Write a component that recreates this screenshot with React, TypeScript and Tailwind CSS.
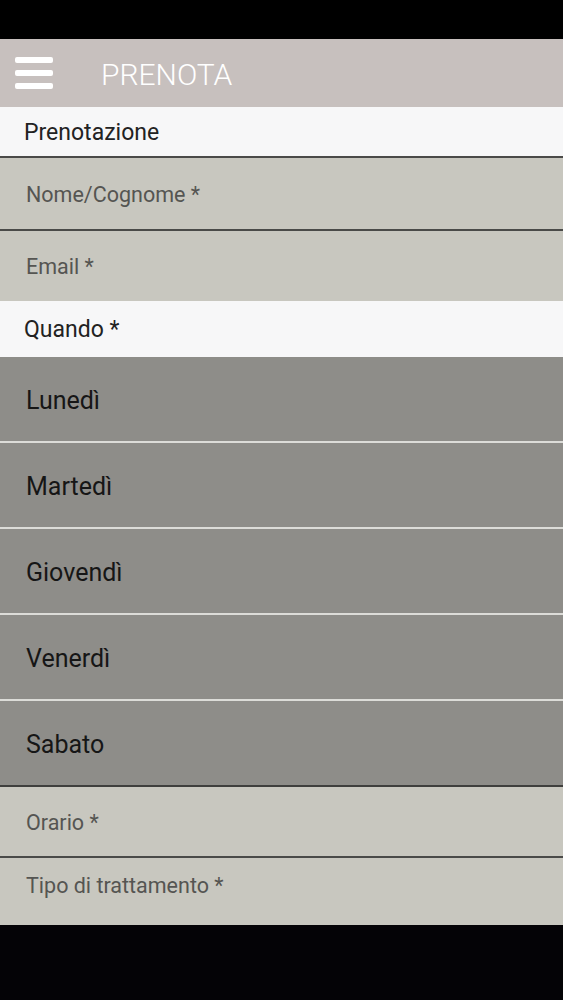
const DAYS = ["Lunedì", "Martedì", "Giovendì", "Venerdì", "Sabato"];

function Section({ label, h }: { label: string; h: string }) {
  return (
    <div className={`${h} flex items-center bg-[#f7f7f8] px-6 pt-[3px] text-[23px] text-[#222]`}>
      {label}
    </div>
  );
}

function Field({ label, h }: { label: string; h: string }) {
  return (
    <div className={`${h} flex items-center border-b-2 border-[#4a4a48] bg-[#c8c7bf] pl-[26px] pt-[4px] text-[21.5px] text-[#555552]`}>
      {label}
    </div>
  );
}

export default function App() {
  return (
    <div className="flex h-[1000px] w-[563px] flex-col bg-black font-['Roboto','Liberation_Sans',sans-serif]">
      <div className="h-[39px] shrink-0 bg-black" />

      <header className="flex h-[68px] shrink-0 items-center bg-[#c7c0be]">
        <div className="ml-[15px] flex w-[38px] flex-col gap-[7px]">
          <span className="h-[6px] rounded-[2px] bg-white" />
          <span className="h-[6px] rounded-[2px] bg-white" />
          <span className="h-[6px] rounded-[2px] bg-white" />
        </div>
        <h1 className="ml-[48px] pt-[2px] text-[30px] font-light text-white">PRENOTA</h1>
      </header>

      <div className="border-b-2 border-[#4a4a48]">
        <Section label="Prenotazione" h="h-[49px]" />
      </div>
      <Field label="Nome/Cognome *" h="h-[73px]" />
      <div className="flex h-[70px] items-center bg-[#c8c7bf] pl-[26px] pt-[3px] text-[21.5px] text-[#555552]">
        Email *
      </div>
      <Section label="Quando *" h="h-[56px]" />

      <div className="flex flex-col">
        {DAYS.map((d, i) => (
          <div
            key={d}
            className={`flex h-[86px] items-center bg-[#8e8d89] pl-[26px] pt-[3px] text-[25px] text-[#161616] ${
              i === DAYS.length - 1 ? "border-b-2 border-[#3f3f3d]" : "border-b-2 border-[#dcdcd8]"
            }`}
          >
            {d}
          </div>
        ))}
      </div>

      <Field label="Orario *" h="h-[71px]" />
      <div className="h-[67px] bg-[#c8c7bf] pl-[26px] pt-[12px] text-[21.5px] text-[#555552]">
        Tipo di trattamento *
      </div>
      <div className="flex-1 bg-[#040306]" />
    </div>
  );
}
